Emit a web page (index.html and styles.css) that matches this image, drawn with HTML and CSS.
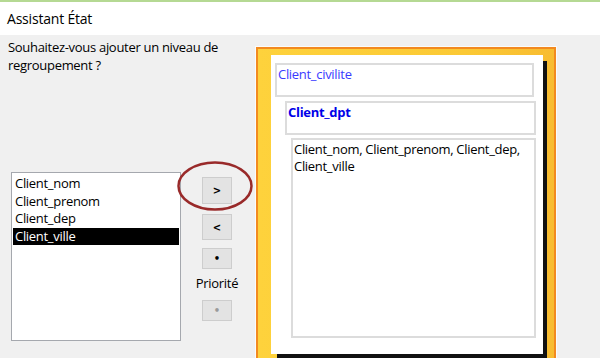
FILE: index.html
```html
<!DOCTYPE html>
<html lang="fr">
<head>
    <meta charset="UTF-8">
    <title>Assistant État</title>
    <link rel="stylesheet" href="styles.css">
</head>
<body>

<header class="titlebar">Assistant État</header>

<div class="main">
    <div class="left">
        <p class="question">Souhaitez-vous ajouter un niveau de regroupement ?</p>

        <div class="picker">
            <ul class="fields">
                <li>Client_nom</li>
                <li>Client_prenom</li>
                <li>Client_dep</li>
                <li class="selected">Client_ville</li>
            </ul>

            <div class="arrows">
                <svg class="circle" width="76" height="50" viewBox="0 0 76 50">
                    <ellipse cx="38" cy="25" rx="36.5" ry="23.5" fill="none" stroke="#992a2a" stroke-width="2.5"/>
                </svg>
                <button class="btn btn-add">&gt;</button>
                <button class="btn btn-remove">&lt;</button>
                <button class="btn btn-up">&bull;</button>
                <span class="priority">Priorité</span>
                <button class="btn btn-down" disabled>&bull;</button>
            </div>
        </div>
    </div>

    <div class="frame">
        <div class="paper">
            <div class="group group-1">Client_civilite</div>
            <div class="group group-2">Client_dpt</div>
            <div class="group group-3">Client_nom, Client_prenom, Client_dep, Client_ville</div>
        </div>
    </div>
</div>

</body>
</html>
```

FILE: styles.css
```css
html, body {
    height: 358px;
    overflow: hidden;
}

body {
    margin: 0;
    background-color: #f0f0f0;
    font-family: 'Open Sans', 'Noto Sans', sans-serif;
    font-size: 13px;
    letter-spacing: -0.3px;
    color: #000;
}

.titlebar {
    height: 33px;
    line-height: 33px;
    border-top: 2px solid #b5d993;
    background-color: #fff;
    padding-left: 7px;
    font-size: 14px;
    letter-spacing: -0.2px;
}

.main {
    display: flex;
}

.left {
    width: 256px;
    box-sizing: border-box;
    padding-left: 8px;
}

.question {
    margin: 0;
    padding-top: 3px;
    width: 232px;
    line-height: 18px;
}

.picker {
    display: flex;
    margin-top: 98px;
}

.fields {
    list-style: none;
    margin: 0 0 0 3px;
    padding: 2px 1px 0 1px;
    width: 170px;
    height: 169px;
    box-sizing: border-box;
    background-color: #fff;
    border: 1px solid #a5a8ae;
}

.fields li {
    height: 17.5px;
    line-height: 17.5px;
    padding-left: 2px;
}

.fields li.selected {
    background-color: #000;
    color: #fff;
}

.arrows {
    position: relative;
    display: flex;
    flex-direction: column;
    align-items: center;
    width: 30px;
    margin-left: 21px;
    margin-top: 5px;
}

.circle {
    position: absolute;
    left: -25px;
    top: -16px;
}

.btn {
    width: 30px;
    height: 21px;
    padding: 0;
    background-color: #e3e3e3;
    border: 1px solid #cdcdcd;
    font-family: 'DejaVu Sans', sans-serif;
    font-size: 10px;
    font-weight: bold;
    letter-spacing: 0;
    color: #000;
}

.btn-add {
    height: 27px;
}

.btn-remove {
    height: 26px;
    margin-top: 10px;
}

.btn-up {
    margin-top: 8px;
}

.priority {
    margin-top: 5px;
    line-height: 18px;
}

.btn-down {
    margin-top: 8px;
    color: #9a9a9a;
}

/* report preview, yellow frame */
.frame {
    width: 300px;
    height: 330px;
    box-sizing: border-box;
    margin-top: 12px;
    padding: 6px 11px 0 13px;
    border: 2px solid #f28a20;
    background: linear-gradient(to right, #fed23c, #fbc935 70%, #f8bc31);
    box-shadow: 0 0 0 1px #fbfbfb;
}

.paper {
    height: 299px;
    box-sizing: border-box;
    padding-top: 8px;
    background-color: #fff;
    box-shadow: 5px 5px 0 -1px #111;
}

.group {
    box-sizing: border-box;
    border: 2px solid #dcdcdc;
    padding: 1px 1px;
    line-height: 17px;
}

.group-1 {
    height: 34px;
    margin: 0 9px 0 4px;
    color: #3a3aff;
}

.group-2 {
    height: 34px;
    margin: 4px 7px 0 14px;
    color: #0000e8;
    font-weight: bold;
}

.group-3 {
    height: 200px;
    margin: 3px 7px 0 20px;
}
```
